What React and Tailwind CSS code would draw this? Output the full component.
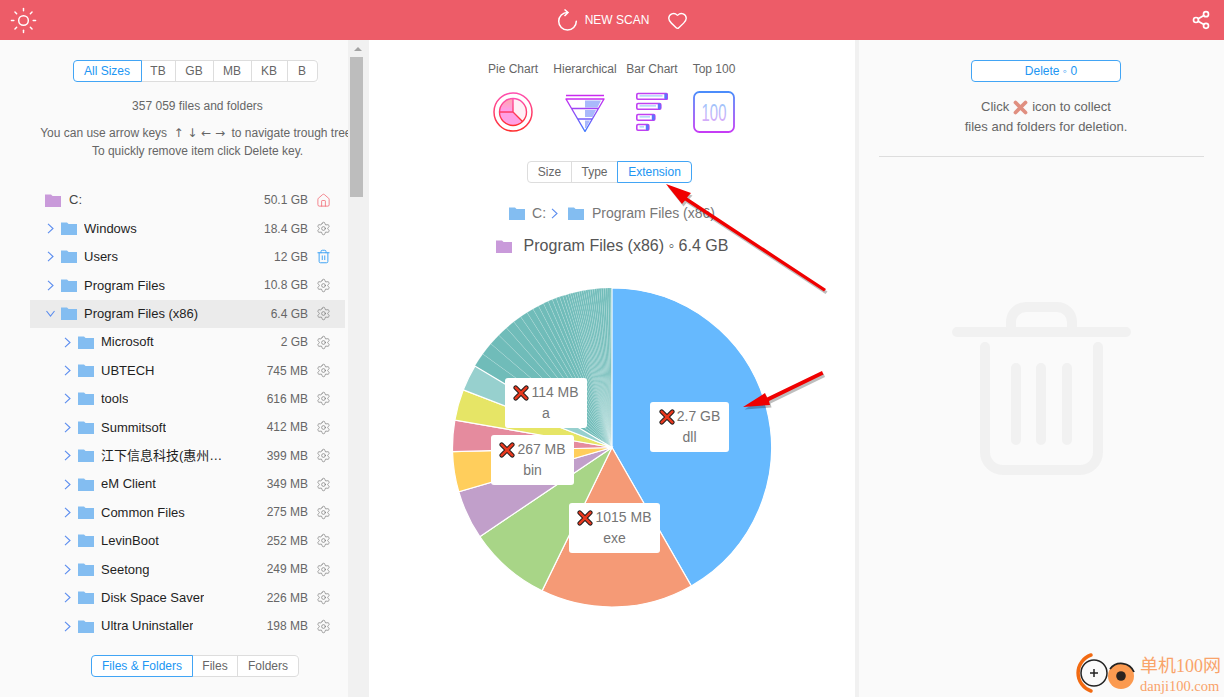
import React from "react";
import { Heart, House, Settings, Share2, Sun, Trash2 } from "lucide-react";

const SANS = "font-['Liberation_Sans','Noto_Sans_CJK_SC',sans-serif]";

const sizeFilters = [
  { label: "All Sizes", w: "w-[69px]", active: true },
  { label: "TB", w: "w-[35px]" },
  { label: "GB", w: "w-[39px]" },
  { label: "MB", w: "w-[39px]" },
  { label: "KB", w: "w-[37px]" },
  { label: "B", w: "w-[31px]" },
];

const typeFilters = [
  { label: "Files & Folders", w: "w-[102px]", active: true },
  { label: "Files", w: "w-[46px]" },
  { label: "Folders", w: "w-[62px]" },
];

const chartFilters = [
  { label: "Size", w: "w-[45px]" },
  { label: "Type", w: "w-[47px]" },
  { label: "Extension", w: "w-[75px]", active: true },
];

const tree = [
  { name: "Windows", size: "18.4 GB", level: 1 },
  { name: "Users", size: "12 GB", level: 1, trash: true },
  { name: "Program Files", size: "10.8 GB", level: 1 },
  { name: "Program Files (x86)", size: "6.4 GB", level: 1, open: true },
  { name: "Microsoft", size: "2 GB", level: 2 },
  { name: "UBTECH", size: "745 MB", level: 2 },
  { name: "tools", size: "616 MB", level: 2 },
  { name: "Summitsoft", size: "412 MB", level: 2 },
  { name: "江下信息科技(惠州)有限公司", size: "399 MB", level: 2 },
  { name: "eM Client", size: "349 MB", level: 2 },
  { name: "Common Files", size: "275 MB", level: 2 },
  { name: "LevinBoot", size: "252 MB", level: 2 },
  { name: "Seetong", size: "249 MB", level: 2 },
  { name: "Disk Space Saver", size: "226 MB", level: 2 },
  { name: "Ultra Uninstaller", size: "198 MB", level: 2 },
];

const pieLabels = [
  { size: "2.7 GB", ext: "dll", pos: "left-[198px] top-[114px] w-[79px]" },
  { size: "1015 MB", ext: "exe", pos: "left-[117px] top-[215px] w-[91px]" },
  { size: "114 MB", ext: "a", pos: "left-[53px] top-[90px] w-[82px]" },
  { size: "267 MB", ext: "bin", pos: "left-[39px] top-[147px] w-[83px]" },
];

// main extensions, angles in degrees clockwise from 12 o'clock
const mainSlices = [
  { from: 0, to: 150.2, fill: "#66b9fe" },
  { from: 150.2, to: 206, fill: "#f59a76" },
  { from: 206, to: 236, fill: "#a8d587" },
  { from: 236, to: 253.9, fill: "#c19fca" },
  { from: 253.9, to: 268.5, fill: "#ffce5c" },
  { from: 268.5, to: 279.9, fill: "#e58b9e" },
  { from: 279.9, to: 291.2, fill: "#e6e566" },
  { from: 291.2, to: 300.7, fill: "#97d0ce" },
];

// long tail of small extensions, each one a bit thinner than the last
const tailSlices = [];
let tailAngle = 300.7;
let tailStep = 5.2;
while (tailAngle < 360) {
  const next = Math.min(360, tailAngle + tailStep);
  tailSlices.push({ from: tailAngle, to: next });
  tailAngle = next;
  tailStep = Math.max(0.8, tailStep * 0.9);
}

const CX = 160;
const CY = 159.5;
const R = 159.5;

const polar = (deg, r = R) => {
  const a = (deg * Math.PI) / 180;
  return [CX + r * Math.sin(a), CY - r * Math.cos(a)];
};

const slicePath = (from, to) => {
  const [x1, y1] = polar(from);
  const [x2, y2] = polar(to);
  const large = to - from > 180 ? 1 : 0;
  return `M${CX} ${CY}L${x1.toFixed(2)} ${y1.toFixed(2)}A${R} ${R} 0 ${large} 1 ${x2.toFixed(2)} ${y2.toFixed(2)}Z`;
};

const Segmented = ({ items }) => (
  <div className={`flex h-[22px] bg-white text-[12px] ${SANS}`}>
    {items.map((item, i) => (
      <div
        key={item.label}
        className={`flex items-center justify-center border ${item.w} ${i === 0 ? "rounded-l-[4px]" : ""} ${i === items.length - 1 ? "rounded-r-[4px]" : ""} ${i > 0 ? "-ml-px" : ""} ${item.active ? "relative z-10 border-[#42a5f5] text-[#2196f3]" : "border-[#dddddd] text-[#666666]"}`}
      >
        {item.label}
      </div>
    ))}
  </div>
);

const Folder = ({ purple = false }) => (
  <svg width="16" height="13" viewBox="0 0 16 13" className="shrink-0">
    <path d="M0 0.5h6l1.6 1.6H16V13H0z" fill={purple ? "#c99ada" : "#83bdf1"} />
  </svg>
);

const ArrowRight = () => (
  <svg width="7" height="11" viewBox="0 0 7 11" fill="none" stroke="#5b8def" strokeWidth="1.1" className="shrink-0">
    <path d="M1 0.8L6 5.5L1 10.2" />
  </svg>
);

const ArrowDown = () => (
  <svg width="9" height="7" viewBox="0 0 9 7" fill="none" stroke="#5b8def" strokeWidth="1.1" className="-ml-px mr-[-1px] shrink-0">
    <path d="M0.5 1L4.5 6L8.5 1" />
  </svg>
);

const RemoveMark = ({ size = 18, faded = false }) => (
  <svg width={size} height={size} viewBox="0 0 18 18" className="shrink-0">
    {!faded && (
      <path d="M3 3l12 12M15 3L3 15" stroke="#1a1a1a" strokeWidth="5" strokeLinecap="round" />
    )}
    <path
      d="M3 3l12 12M15 3L3 15"
      stroke={faded ? "#e08f80" : "#e8391f"}
      strokeWidth={faded ? 4.5 : 3}
      strokeLinecap="round"
    />
  </svg>
);

const TreeRow = ({ item }) => (
  <div
    className={`flex h-[28.4px] w-[315px] items-center pr-[14px] ${item.level === 2 ? "pl-[34px]" : "pl-[17px]"} ${item.open ? "bg-[#ebebeb]" : ""}`}
  >
    {item.open ? <ArrowDown /> : <ArrowRight />}
    <span className="ml-[7px]">
      <Folder />
    </span>
    <span className="ml-[7px] max-w-[123px] truncate text-[13px] text-[#1f1f1f]">{item.name}</span>
    <span className="ml-auto text-[12px] text-[#666666]">{item.size}</span>
    {item.trash ? (
      <Trash2 size={15} strokeWidth={1.6} className="ml-[8px] shrink-0 text-[#42a5f5]" />
    ) : (
      <Settings size={15} strokeWidth={1.1} className="ml-[8px] shrink-0 text-[#777777]" />
    )}
  </div>
);

const PieIcon = () => (
  <svg width="40" height="40" viewBox="0 0 40 40">
    <defs>
      <linearGradient id="pieStroke" x1="0" y1="0" x2="0" y2="1">
        <stop offset="0" stopColor="#ff4fb0" />
        <stop offset="1" stopColor="#ff2f2f" />
      </linearGradient>
      <linearGradient id="pieFill" x1="0" y1="0" x2="0" y2="1">
        <stop offset="0" stopColor="#ffa8a8" />
        <stop offset="1" stopColor="#ff9cf2" />
      </linearGradient>
    </defs>
    <circle cx="20" cy="20" r="19" fill="none" stroke="url(#pieStroke)" strokeWidth="1.5" />
    <path d="M20 20V6.5A13.5 13.5 0 0 0 6.5 20z" fill="url(#pieFill)" />
    <path d="M6.5 20A13.5 13.5 0 0 0 29.5 29.5L20 20z" fill="#ffa0e4" />
    <path d="M20 6.5A13.5 13.5 0 0 1 29.5 29.5L20 20z" fill="#fff0f6" />
    <circle cx="20" cy="20" r="13.5" fill="none" stroke="url(#pieStroke)" strokeWidth="1.4" />
    <path d="M20 6.5V20L29.5 29.5M20 20H6.5" fill="none" stroke="url(#pieStroke)" strokeWidth="1.4" />
  </svg>
);

const FunnelIcon = () => (
  <svg width="40" height="40" viewBox="0 0 40 40">
    <defs>
      <linearGradient id="funnelStroke" x1="0" y1="0" x2="0" y2="1">
        <stop offset="0" stopColor="#c92cf0" />
        <stop offset="1" stopColor="#3f7bff" />
      </linearGradient>
    </defs>
    <path d="M20 8.5H36L32.5 15.5H20zM20 18H31L27.5 25H20zM20 28.5H25L21 36H20z" fill="#a9b9fb" />
    <path d="M1 3.5h38" stroke="#c92cf0" strokeWidth="1.3" />
    <path
      d="M1 7h38L20 39.5zM6.5 16.5h27M12.5 27h15"
      fill="none"
      stroke="url(#funnelStroke)"
      strokeWidth="1.4"
      strokeLinejoin="round"
    />
  </svg>
);

const BarsIcon = () => (
  <svg width="32" height="40" viewBox="0 0 32 40">
    {[
      { y: 1.5, w: 30.5 },
      { y: 11.5, w: 24 },
      { y: 22.5, w: 18 },
      { y: 32.5, w: 12 },
    ].map((bar) => (
      <g key={bar.y}>
        <rect x="0.8" y={bar.y} width={bar.w} height="5.8" rx="1.2" fill="#ffffff" stroke="#c040f2" strokeWidth="1.6" />
        <path d={`M3.5 ${bar.y + 2.4}H${bar.w - 4}`} stroke="#8ec5f8" strokeWidth="1.1" />
        <rect x={bar.w - 2.2} y={bar.y} width="3" height="5.8" rx="1" fill="#5e74fb" />
      </g>
    ))}
  </svg>
);

const TopIcon = () => (
  <svg width="42" height="42" viewBox="0 0 42 42">
    <defs>
      <linearGradient id="topStroke" x1="0" y1="0" x2="0" y2="1">
        <stop offset="0" stopColor="#4b8dfb" />
        <stop offset="1" stopColor="#c63cf5" />
      </linearGradient>
      <linearGradient id="topDigits" x1="0" y1="0" x2="0" y2="1">
        <stop offset="0" stopColor="#8fcbfb" />
        <stop offset="1" stopColor="#e2a6f8" />
      </linearGradient>
    </defs>
    <rect x="1" y="1" width="40" height="40" rx="5.5" fill="none" stroke="url(#topStroke)" strokeWidth="1.8" />
    <text
      transform="translate(21 29.5) scale(0.62 1)"
      textAnchor="middle"
      fontFamily="Liberation Sans, sans-serif"
      fontSize="24"
      fill="url(#topDigits)"
    >
      100
    </text>
  </svg>
);

const chartTypes = [
  { label: "Pie Chart", w: "w-[76px]", icon: <PieIcon /> },
  { label: "Hierarchical", w: "w-[68px]", icon: <FunnelIcon /> },
  { label: "Bar Chart", w: "w-[66px]", icon: <BarsIcon /> },
  { label: "Top 100", w: "w-[58px]", icon: <TopIcon /> },
];

const Pie = () => (
  <div className="relative mt-[31px] h-[320px] w-[320px]">
    <svg width="320" height="320" viewBox="0 0 320 320">
      {tailSlices.map((s, i) => (
        <path
          key={i}
          d={slicePath(s.from, s.to)}
          fill="#70bcb9"
          stroke="#ffffff"
          strokeOpacity="0.3"
          strokeWidth="0.4"
        />
      ))}
      {mainSlices.map((s) => (
        <path key={s.from} d={slicePath(s.from, s.to)} fill={s.fill} stroke="#ffffff" strokeWidth="1.2" />
      ))}
    </svg>
    {pieLabels.map((l) => (
      <div
        key={l.ext}
        className={`absolute flex h-[50px] flex-col items-center justify-center rounded-[3px] bg-white text-[14px] leading-[21px] text-[#757575] ${l.pos}`}
      >
        <div className="flex items-center">
          <span className="mr-[2px]">
            <RemoveMark size={16} />
          </span>
          <span>{l.size}</span>
        </div>
        <div>{l.ext}</div>
      </div>
    ))}
  </div>
);

const Watermark = () => (
  <div className="absolute bottom-0 right-0 flex h-[57px] w-[150px] items-center bg-[#fafafa] pt-[10px]">
    <svg width="66" height="44" viewBox="0 0 66 44" className="shrink-0">
      <path d="M17 3A19 19 0 0 0 17 39" fill="none" stroke="#f26a12" strokeWidth="3.5" strokeLinecap="round" />
      <circle cx="20" cy="21" r="13" fill="#fafafa" stroke="#222222" strokeWidth="1.5" />
      <path d="M20 17v8M16 21h8" stroke="#222222" strokeWidth="1.5" />
      <circle cx="47" cy="24" r="13" fill="#fb9a50" />
      <path d="M36 17A14 14 0 0 1 60 20" fill="none" stroke="#222222" strokeWidth="1.8" />
      <circle cx="47" cy="24" r="4.8" fill="#2a2320" />
    </svg>
    <div className="mt-[2px] flex flex-col font-['Liberation_Serif','Noto_Sans_CJK_SC',serif] text-[#f9a36a]">
      <span className="text-[18px] leading-[22px]">单机100网</span>
      <span className="text-[14.5px] leading-[18px]">danji100.com</span>
    </div>
  </div>
);

const App = () => {
  return (
    <div className={`relative flex h-screen flex-col overflow-hidden bg-white ${SANS}`}>
      {/* top bar */}
      <header className="flex h-[40px] shrink-0 items-center justify-between bg-[#ed5c68] pl-[9px] pr-[13px] text-white">
        <Sun size={29} strokeWidth={1.2} />
        <div className="ml-[16px] flex items-center">
          <svg width="21" height="22" viewBox="0 0 21 22">
            <path d="M10.5 3.5A8.8 8.8 0 1 0 19.3 12.3" fill="none" stroke="#ffffff" strokeWidth="1.5" strokeLinecap="round" />
            <path d="M7.5 0.5L11 3.5L7.5 7" fill="none" stroke="#ffffff" strokeWidth="1.5" />
          </svg>
          <span className="ml-[7px] text-[12px]">NEW SCAN</span>
          <Heart size={21} strokeWidth={1.6} className="ml-[18px]" />
        </div>
        <Share2 size={20} strokeWidth={2} />
      </header>

      <main className="flex min-h-0 flex-1">
        {/* folder tree */}
        <aside className="flex w-[348px] shrink-0 flex-col overflow-hidden bg-[#fafafa] pt-[20px]">
          <div className="flex w-[390px] justify-center">
            <Segmented items={sizeFilters} />
          </div>
          <div className="mt-[17px] w-[395px] text-center text-[12px] leading-[14px] text-[#666666]">
            357 059 files and folders
          </div>
          <div className="mt-[11px] w-[395px] whitespace-nowrap text-center text-[12px] leading-[18px] text-[#666666]">
            <div>
              You can use arrow keys <span className="px-[3px] font-['DejaVu_Sans']">↑ ↓ ← →</span> to navigate trough tree.
            </div>
            <div>To quickly remove item click Delete key.</div>
          </div>
          <div className="ml-[30px] mt-[26px]">
            <div className="flex h-[28.4px] w-[315px] items-center pl-[15px] pr-[14px]">
              <Folder purple />
              <span className="ml-[8px] text-[13px] text-[#444444]">C:</span>
              <span className="ml-auto text-[12px] text-[#666666]">50.1 GB</span>
              <House size={15} strokeWidth={1.2} className="ml-[8px] text-[#f2606c]" />
            </div>
            {tree.map((item) => (
              <TreeRow key={item.name} item={item} />
            ))}
          </div>
          <div className="mt-[15px] flex w-[390px] justify-center">
            <Segmented items={typeFilters} />
          </div>
        </aside>

        {/* scrollbar gutter */}
        <div className="flex w-[21px] shrink-0 flex-col bg-[#f1f1f1] pl-[2px] pt-[7px]">
          <div className="ml-[4px] h-0 w-0 border-x-[4px] border-b-[4px] border-x-transparent border-b-[#a3a3a3]" />
          <div className="mt-[6px] h-[140px] w-[13px] bg-[#bdbdbd]" />
        </div>

        {/* chart */}
        <section className="flex flex-1 flex-col items-center pt-[22px]">
          <div className="flex pr-[6px]">
            {chartTypes.map((c) => (
              <div key={c.label} className={`flex flex-col items-center ${c.w}`}>
                <span className="h-[14px] whitespace-nowrap text-[12px] leading-[14px] text-[#666666]">{c.label}</span>
                <div className="mt-[15px] flex h-[42px] items-center justify-center">{c.icon}</div>
              </div>
            ))}
          </div>
          <div className="mr-[5px] mt-[28px]">
            <Segmented items={chartFilters} />
          </div>
          <div className="mt-[20px] flex h-[20px] items-center text-[14px] text-[#777777]">
            <Folder />
            <span className="ml-[7px]">C:</span>
            <span className="ml-[5px]">
              <ArrowRight />
            </span>
            <span className="ml-[10px]">
              <Folder />
            </span>
            <span className="ml-[8px]">Program Files (x86)</span>
          </div>
          <div className="mt-[12px] flex h-[22px] items-center text-[16px] text-[#555555]">
            <Folder purple />
            <span className="ml-[12px]">Program Files (x86) ◦ 6.4 GB</span>
          </div>
          <Pie />
        </section>

        {/* deletion list */}
        <aside className="flex w-[369px] shrink-0 flex-col items-center border-l-4 border-[#f1f1f1] bg-[#fafafa] pt-[20px]">
          <div className="ml-[9px] flex h-[22px] w-[150px] items-center justify-center rounded-[4px] border border-[#42a5f5] bg-white pl-[10px] text-[12px] text-[#2196f3]">
            Delete ◦ 0
          </div>
          <div className="ml-[9px] mt-[15px] flex h-[20px] items-center text-[13px] text-[#666666]">
            Click
            <span className="mx-[4px]">
              <RemoveMark size={15} faded />
            </span>
            icon to collect
          </div>
          <div className="ml-[9px] text-[13px] leading-[20px] text-[#666666]">files and folders for deletion.</div>
          <div className="mt-[19px] h-px w-[325px] bg-[#dddddd]" />
          <svg width="180" height="174" viewBox="0 0 180 174" fill="none" stroke="#f1f1f1" strokeWidth="10" strokeLinecap="round" className="mt-[145px]">
            <path d="M5 30H174" />
            <path d="M59 25V20A15 15 0 0 1 74 5H105A15 15 0 0 1 120 20V25" />
            <path d="M33 45V150A18 18 0 0 0 51 168H128A18 18 0 0 0 146 150V45" />
            <path d="M64 66V138M89 66V138M115 66V138" />
          </svg>
        </aside>
      </main>

      {/* callout arrows */}
      <svg width="1224" height="697" viewBox="0 0 1224 697" className="pointer-events-none absolute left-0 top-0 z-20">
        <g fill="#000000" opacity="0.25" transform="translate(1.5 2.5)">
          <path d="M666 184L691 193L687 197.5L826 289L824 291.5L685 200.5L682 204z" />
          <path d="M743 407L765 393L767 397.5L822 371L823.5 374.5L769 401L770 405z" />
        </g>
        <g fill="#f00000">
          <path d="M666 184L691 193L687 197.5L826 289L824 291.5L685 200.5L682 204z" />
          <path d="M743 407L765 393L767 397.5L822 371L823.5 374.5L769 401L770 405z" />
        </g>
      </svg>

      <Watermark />
    </div>
  );
};

export default App;
